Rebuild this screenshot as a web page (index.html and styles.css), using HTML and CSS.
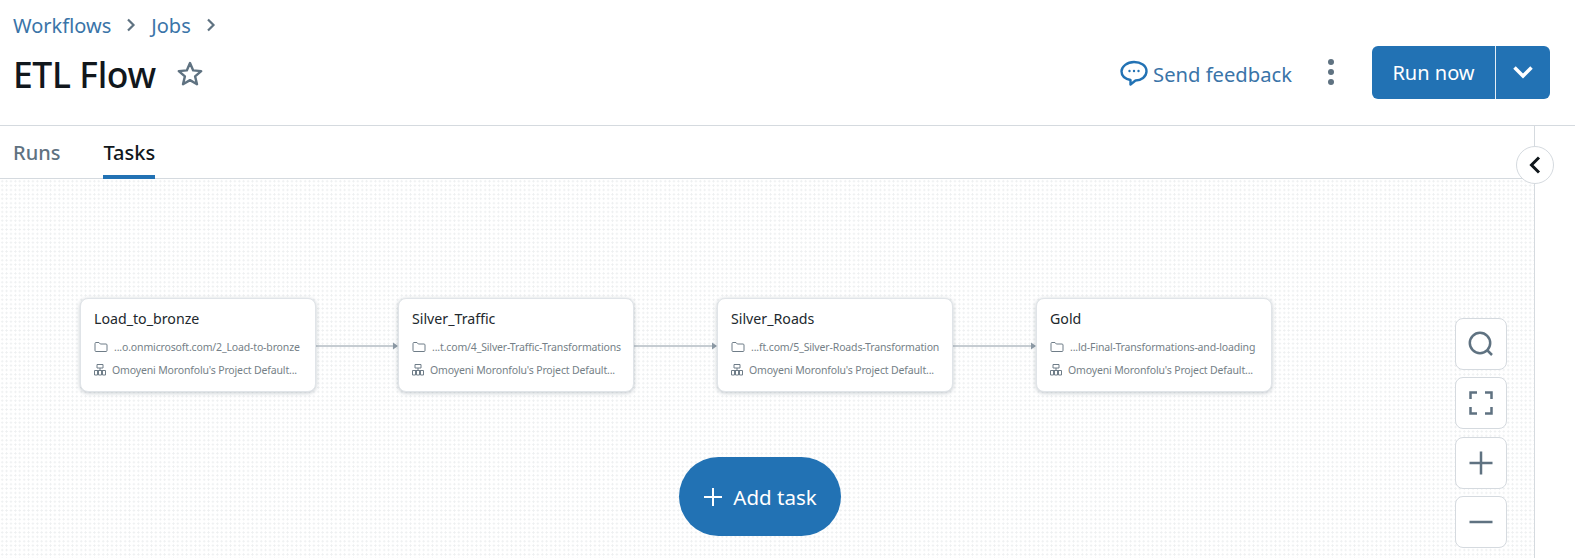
FILE: index.html
```html
<!DOCTYPE html>
<html lang="en">
<head>
  <meta charset="UTF-8">
  <title>ETL Flow</title>
  <link rel="stylesheet" href="styles.css">
</head>
<body>
  <header class="page-header">
    <nav class="crumbs">
      <a class="crumb">Workflows</a>
      <svg class="crumb-sep" width="12" height="16" viewBox="0 0 12 16"><path d="M3 2.500l5.500 5.500L3 13.500" /></svg>
      <a class="crumb">Jobs</a>
      <svg class="crumb-sep" width="12" height="16" viewBox="0 0 12 16"><path d="M3 2.500l5.500 5.500L3 13.500" /></svg>
    </nav>
    <div class="title-row">
      <h1>ETL Flow</h1>
      <svg class="star" width="28" height="28" viewBox="0 0 28 28"><path d="M14 3l3.200 7.400 8 .7-6.100 5.300 1.900 7.800L14 20.100l-7 4.100 1.900-7.800-6.100-5.300 8-.7z" /></svg>
      <div class="actions">
        <a class="feedback">
          <svg width="28" height="26" viewBox="0 0 28 26"><path class="bubble" d="M14 2c6.800 0 12.500 3.800 12.500 9.300S21 20.500 15.500 20.500L10.500 24.500V20C5.500 19 1.500 16 1.500 11.300S7.200 2 14 2z" /><circle cx="9.500" cy="11" r="1.200" /><circle cx="14" cy="11" r="1.200" /><circle cx="18.500" cy="11" r="1.200" /></svg>
          <span>Send feedback</span>
        </a>
        <div class="kebab"><i></i><i></i><i></i></div>
        <div class="run-group">
          <button class="run-btn">Run now</button>
          <button class="run-caret">
            <svg width="22" height="14" viewBox="0 0 22 14"><path d="M2.500 2.500L11 11l8.500-8.500" /></svg>
          </button>
        </div>
      </div>
    </div>
  </header>

  <div class="main">
    <div class="content">
      <div class="tabs">
        <div class="tab">Runs</div>
        <div class="tab active">Tasks</div>
      </div>
      <div class="canvas">
        <svg class="edges" width="1534" height="379">
          <g class="edge"><path d="M315 167H394" /><path class="head" d="M393 163.500l5 3.500-5 3.500z" /></g>
          <g class="edge"><path d="M634 167H713" /><path class="head" d="M712 163.500l5 3.500-5 3.500z" /></g>
          <g class="edge"><path d="M953 167H1032" /><path class="head" d="M1031 163.500l5 3.500-5 3.500z" /></g>
        </svg>

        <div class="node n1">
          <div class="node-name">Load_to_bronze</div>
          <div class="node-line">
            <svg class="ico-folder" width="14" height="12" viewBox="0 0 14 12"><path d="M1 2.500a1 1 0 0 1 1-1h3l1.300 1.500H12a1 1 0 0 1 1 1v5.500a1 1 0 0 1-1 1H2a1 1 0 0 1-1-1z" /></svg>
            <span class="path">...o.onmicrosoft.com/2_Load-to-bronze</span>
          </div>
          <div class="node-line">
            <svg class="ico-cluster" width="12" height="12" viewBox="0 0 12 12"><path d="M3 .5h6v3.500H3zM6 4V6.500M.5 6.500h11M.5 6.500V11h3V6.500M4.500 6.500V11h3V6.500M8.500 6.500V11h3V6.500" /></svg>
            <span class="cluster">Omoyeni Moronfolu's Project Default...</span>
          </div>
        </div>

        <div class="node n2">
          <div class="node-name">Silver_Traffic</div>
          <div class="node-line">
            <svg class="ico-folder" width="14" height="12" viewBox="0 0 14 12"><path d="M1 2.500a1 1 0 0 1 1-1h3l1.300 1.500H12a1 1 0 0 1 1 1v5.500a1 1 0 0 1-1 1H2a1 1 0 0 1-1-1z" /></svg>
            <span class="path">...t.com/4_Silver-Traffic-Transformations</span>
          </div>
          <div class="node-line">
            <svg class="ico-cluster" width="12" height="12" viewBox="0 0 12 12"><path d="M3 .5h6v3.500H3zM6 4V6.500M.5 6.500h11M.5 6.500V11h3V6.500M4.500 6.500V11h3V6.500M8.500 6.500V11h3V6.500" /></svg>
            <span class="cluster">Omoyeni Moronfolu's Project Default...</span>
          </div>
        </div>

        <div class="node n3">
          <div class="node-name">Silver_Roads</div>
          <div class="node-line">
            <svg class="ico-folder" width="14" height="12" viewBox="0 0 14 12"><path d="M1 2.500a1 1 0 0 1 1-1h3l1.300 1.500H12a1 1 0 0 1 1 1v5.500a1 1 0 0 1-1 1H2a1 1 0 0 1-1-1z" /></svg>
            <span class="path">...ft.com/5_Silver-Roads-Transformation</span>
          </div>
          <div class="node-line">
            <svg class="ico-cluster" width="12" height="12" viewBox="0 0 12 12"><path d="M3 .5h6v3.500H3zM6 4V6.500M.5 6.500h11M.5 6.500V11h3V6.500M4.500 6.500V11h3V6.500M8.500 6.500V11h3V6.500" /></svg>
            <span class="cluster">Omoyeni Moronfolu's Project Default...</span>
          </div>
        </div>

        <div class="node n4">
          <div class="node-name">Gold</div>
          <div class="node-line">
            <svg class="ico-folder" width="14" height="12" viewBox="0 0 14 12"><path d="M1 2.500a1 1 0 0 1 1-1h3l1.300 1.500H12a1 1 0 0 1 1 1v5.500a1 1 0 0 1-1 1H2a1 1 0 0 1-1-1z" /></svg>
            <span class="path">...ld-Final-Transformations-and-loading</span>
          </div>
          <div class="node-line">
            <svg class="ico-cluster" width="12" height="12" viewBox="0 0 12 12"><path d="M3 .5h6v3.500H3zM6 4V6.500M.5 6.500h11M.5 6.500V11h3V6.500M4.500 6.500V11h3V6.500M8.500 6.500V11h3V6.500" /></svg>
            <span class="cluster">Omoyeni Moronfolu's Project Default...</span>
          </div>
        </div>

        <button class="add-task">
          <svg width="20" height="20" viewBox="0 0 20 20"><path d="M10 1v18M1 10h18" /></svg>
          Add task
        </button>

        <div class="zoom-controls">
          <button class="zoom-btn"><svg width="26" height="26" viewBox="0 0 26 26"><circle cx="12" cy="12" r="10.200" /><path d="M19.500 19.500l4.500 4.500" /></svg></button>
          <button class="zoom-btn"><svg width="24" height="24" viewBox="0 0 24 24"><path d="M1.500 8V1.500H8M16 1.500h6.500V8M22.500 16v6.500H16M8 22.500H1.500V16" /></svg></button>
          <button class="zoom-btn"><svg width="24" height="24" viewBox="0 0 24 24"><path d="M12 .5v23M.5 12h23" /></svg></button>
          <button class="zoom-btn"><svg width="24" height="24" viewBox="0 0 24 24"><path d="M.5 12h23" /></svg></button>
        </div>
      </div>
    </div>
    <aside class="side">
      <button class="collapse"><svg width="14" height="18" viewBox="0 0 14 18"><path d="M11 1.500L3.500 9l7.500 7.500" /></svg></button>
    </aside>
  </div>
</body>
</html>
```

FILE: styles.css
```css
* {
  box-sizing: border-box;
}
html, body {
  height: 100%;
}
body {
  margin: 0;
  height: 558px;
  overflow: hidden;
  display: flex;
  flex-direction: column;
  background: #fff;
  color: #11171c;
  font-family: "Noto Sans", "Open Sans", sans-serif;
}
button {
  font-family: inherit;
  border: none;
  cursor: pointer;
}

/* header */
.page-header {
  height: 126px;
  flex: none;
  padding: 12px 25px 0 13px;
  border-bottom: 1px solid #d5dadf;
}
.crumbs {
  display: flex;
  align-items: center;
  height: 26px;
  gap: 14px;
}
.crumb {
  color: #3a74a8;
  font-size: 20px;
}
.crumb-sep path {
  fill: none;
  stroke: #5f7281;
  stroke-width: 2.200;
}
.title-row {
  display: flex;
  align-items: center;
  margin-top: 9px;
  height: 54px;
}
h1 {
  margin: 0;
  font-size: 35.500px;
  font-weight: 500;
  letter-spacing: -0.4px;
}
.star {
  margin-left: 20px;
}
.star path {
  fill: none;
  stroke: #5f7281;
  stroke-width: 2.400;
  stroke-linejoin: round;
}
.actions {
  margin-left: auto;
  display: flex;
  align-items: center;
}
.feedback {
  display: flex;
  align-items: center;
  gap: 5px;
  color: #3a74a8;
  font-size: 20.200px;
}
.feedback svg {
  fill: #2272b4;
  margin-top: -3px;
}
.feedback .bubble {
  fill: none;
  stroke: #2272b4;
  stroke-width: 2.400;
  stroke-linejoin: round;
}
.kebab {
  display: flex;
  flex-direction: column;
  gap: 4px;
  margin: -4px 38px 0 36px;
}
.kebab i {
  display: block;
  width: 6px;
  height: 6px;
  border-radius: 50%;
  background: #5f7281;
}
.run-group {
  display: flex;
  height: 53px;
  margin-top: -4px;
  border-radius: 6px;
  overflow: hidden;
}
.run-btn, .run-caret {
  background: #2272b4;
  color: #fff;
}
.run-btn {
  width: 124px;
  font-size: 20px;
  border-right: 1px solid #e4eef6;
}
.run-caret {
  width: 54px;
  display: flex;
  align-items: center;
  justify-content: center;
}
.run-caret path {
  fill: none;
  stroke: #fff;
  stroke-width: 3.500;
}

/* tabs and canvas */
.main {
  flex: 1;
  display: flex;
  min-height: 0;
}
.content {
  width: 1535px;
  flex: none;
  display: flex;
  flex-direction: column;
  border-right: 1px solid #d5dadf;
}
.tabs {
  height: 53px;
  flex: none;
  display: flex;
  gap: 43px;
  padding-left: 13px;
  border-bottom: 1px solid #d5dadf;
}
.tab {
  font-size: 20px;
  font-weight: 500;
  color: #5f7281;
  padding-top: 13px;
}
.tab.active {
  color: #11171c;
  border-bottom: 4px solid #2272b4;
  margin-bottom: -1px;
}
.canvas {
  flex: 1;
  position: relative;
  background-color: #fff;
  background-image: radial-gradient(circle, #eef0f1 1px, transparent 1.100px);
  background-size: 4.400px 4.400px;
}
.edges {
  position: absolute;
  left: 0;
  top: 0;
}
.edge path {
  fill: none;
  stroke: #8d9aa5;
  stroke-width: 1;
}
.edge .head {
  fill: #8d9aa5;
  stroke: none;
}
.node {
  position: absolute;
  top: 119px;
  width: 236px;
  height: 94px;
  padding: 10px 13px;
  background: #fff;
  border-radius: 8px;
  border: 1px solid #e0e4e8;
  box-shadow: 0 1px 4px rgba(40, 60, 80, 0.28);
}
.n1 { left: 80px; }
.n2 { left: 398px; }
.n3 { left: 717px; }
.n4 { left: 1036px; }
.node-name {
  font-size: 14.200px;
  line-height: 20px;
  color: #22282d;
  margin-bottom: 6px;
}
.node-line {
  display: flex;
  align-items: center;
  height: 23px;
  font-size: 10.500px;
  letter-spacing: -0.15px;
  color: #757f87;
  white-space: nowrap;
}
.ico-folder {
  flex: none;
  margin-right: 6px;
}
.ico-folder path, .ico-cluster path {
  fill: none;
  stroke: #6f7d88;
  stroke-width: 1;
}
.ico-cluster {
  flex: none;
  margin-right: 6px;
}
.add-task {
  position: absolute;
  left: 679px;
  top: 278px;
  width: 162px;
  height: 79px;
  border-radius: 40px;
  background: #2272b4;
  color: #fff;
  font-size: 20.500px;
  display: flex;
  align-items: center;
  justify-content: center;
  gap: 10px;
}
.add-task path {
  fill: none;
  stroke: #fff;
  stroke-width: 2;
}
.zoom-controls {
  position: absolute;
  left: 1455px;
  top: 139px;
  display: flex;
  flex-direction: column;
  gap: 7.300px;
}
.zoom-btn {
  width: 52px;
  height: 52px;
  padding: 0;
  display: flex;
  align-items: center;
  justify-content: center;
  background: #fff;
  border: 1px solid #d5dadf;
  border-radius: 8px;
}
.zoom-btn path, .zoom-btn circle {
  fill: none;
  stroke: #5f7281;
  stroke-width: 2.500;
}

/* right pane */
.side {
  flex: 1;
  position: relative;
}
.collapse {
  position: absolute;
  left: -19px;
  top: 20px;
  width: 38px;
  height: 38px;
  padding: 0;
  display: flex;
  align-items: center;
  justify-content: center;
  background: #fff;
  border: 1px solid #d5dadf;
  border-radius: 50%;
}
.collapse path {
  fill: none;
  stroke: #11171c;
  stroke-width: 3;
}
```
